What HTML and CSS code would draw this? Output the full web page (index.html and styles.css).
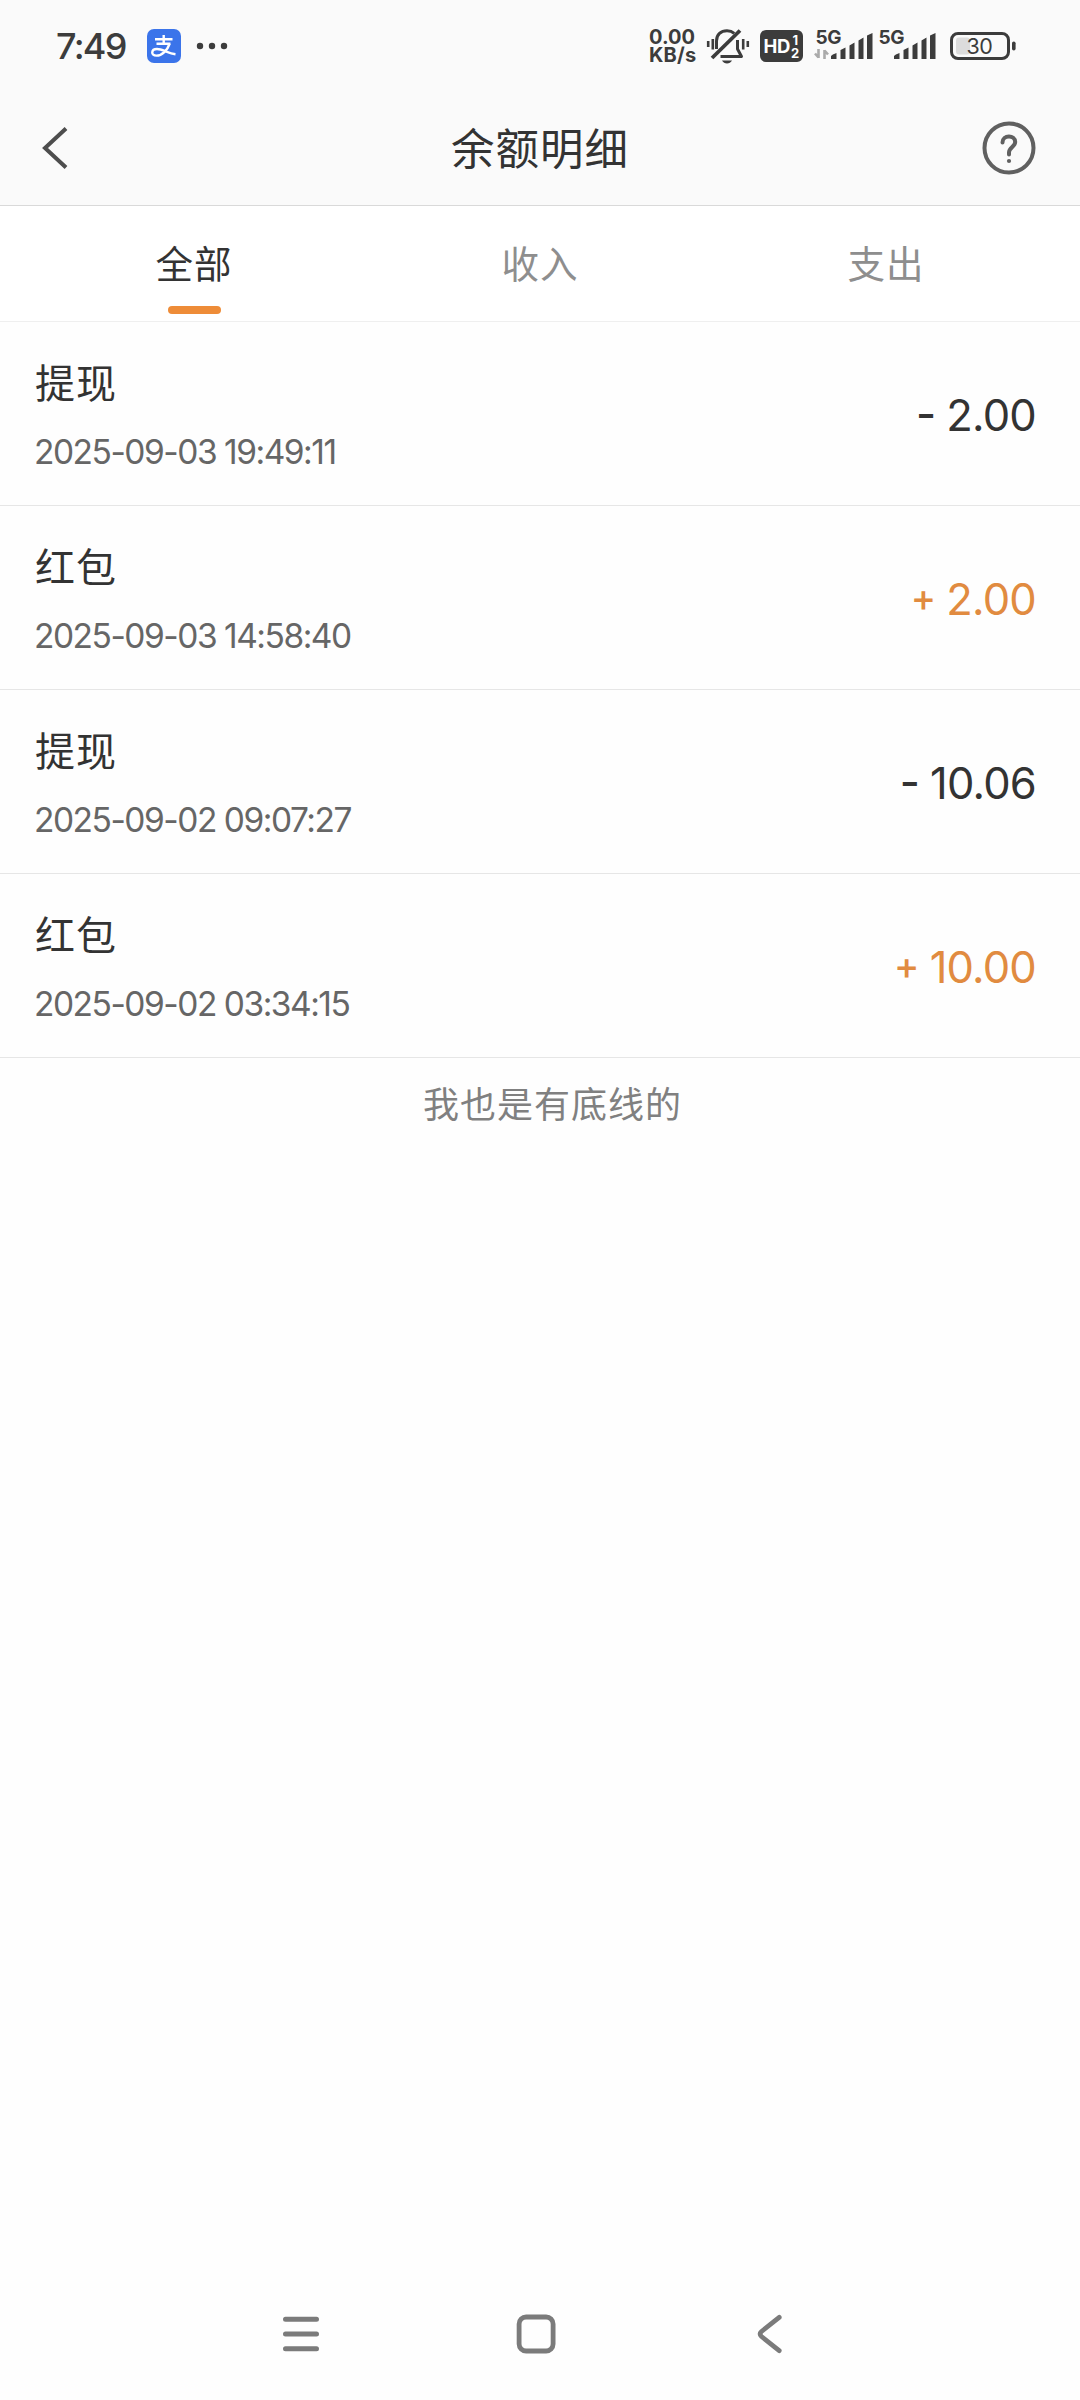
FILE: index.html
```html
<!DOCTYPE html>
<html lang="zh-CN">
<head>
<meta charset="utf-8">
<title>余额明细</title>
<link rel="stylesheet" href="styles.css">
</head>
<body>
<div class="screen">
  <div class="top">
    <div class="status">
      <span class="clock">7:49</span>
      <svg class="alipay" width="34" height="34" viewBox="0 0 34 34">
        <rect width="34" height="34" rx="7" fill="#3b74ea"/>
        <g fill="none" stroke="#fff" stroke-width="2.4">
          <path d="M8 10.200H25.500M16.700 6V14.500M9.500 14.800H23.500"/>
          <path d="M22.500 15C20.500 21 15 26.600 9.500 26.600C3.500 26.600 4 20 10 20C15.500 20 21 24.300 28.500 25.200"/>
        </g>
      </svg>
      <svg class="dots" width="32" height="8" viewBox="0 0 32 8" fill="#3c3c3c">
        <circle cx="4" cy="4" r="3.200"/><circle cx="16" cy="4" r="3.200"/><circle cx="28" cy="4" r="3.200"/>
      </svg>
      <div class="indicators">
        <div class="speed"><span class="speed-value">0.00</span><span class="speed-unit">KB/s</span></div>
        <svg class="bell" width="44" height="38" viewBox="0 0 44 38" fill="none" stroke="#3c3c3c" stroke-width="3">
          <path d="M10.500 22V14C10.500 7.500 15 3.800 21 3.800C24 3.800 26.500 4.800 28.200 6.300M31.500 13V22L35.500 29.500H14.500" stroke-linejoin="round"/>
          <path d="M6 31L34 3.500" stroke-width="3.800"/>
          <path d="M16 33.500C18 37.500 24 37.500 26 33.500Z" fill="#3c3c3c" stroke="none"/>
          <path d="M2.200 14V20M6.800 12V22.500M37.200 12V22.500M41.800 14V20" stroke-width="2.600"/>
        </svg>
        <svg class="hd" width="43" height="32" viewBox="0 0 43 32">
          <rect width="43" height="32" rx="6" fill="#3c3c3c"/>
          <text x="3.500" y="22.500" class="hd-label">HD</text>
          <text x="32.500" y="14.500" class="hd-sim">1</text>
          <text x="31" y="28" class="hd-sim">2</text>
        </svg>
        <svg class="signal first" width="60" height="42" viewBox="0 -4 60 42">
          <text x="1.500" y="15" class="net">5G</text>
          <path d="M4.500 20V29M1 24.500L4.500 28.500M10.500 30V21M14 25.500L10.500 21.500" stroke="#aaa" stroke-width="2.600" fill="none"/>
          <path d="M17 30V27Q18 25.500 22.500 24V30ZM26.500 30V21L31.500 18.500V30ZM35.500 30V16.500L40.500 13.500V30ZM44.500 30V11.500L49.500 8.500V30ZM53 30V6.500L58.500 4V30Z" fill="#3c3c3c"/>
        </svg>
        <svg class="signal" width="60" height="42" viewBox="0 -4 60 42">
          <text x="1.500" y="15" class="net">5G</text>
          <path d="M17 30V27Q18 25.500 22.500 24V30ZM26.500 30V21L31.500 18.500V30ZM35.500 30V16.500L40.500 13.500V30ZM44.500 30V11.500L49.500 8.500V30ZM53 30V6.500L58.500 4V30Z" fill="#3c3c3c"/>
        </svg>
        <svg class="battery" width="66" height="30" viewBox="0 0 66 30">
          <rect x="1.500" y="2.500" width="57" height="25" rx="6.500" fill="none" stroke="#3c3c3c" stroke-width="3"/>
          <rect x="6" y="6.500" width="14" height="17" rx="3" fill="#dcdcdc"/>
          <rect x="62" y="10.500" width="3.600" height="9" rx="1.800" fill="#3c3c3c"/>
          <text x="16.500" y="23" class="level">30</text>
        </svg>
      </div>
    </div>
    <header class="bar">
      <svg width="28" height="44" viewBox="0 0 28 44" fill="none" stroke="#4d4d4d" stroke-width="4"><path d="M24 2.500L3 22L24 41.500"/></svg>
      <h1 class="title">余额明细</h1>
      <svg width="54" height="54" viewBox="0 0 54 54" fill="none" stroke="#606060">
        <circle cx="27" cy="27" r="24.500" stroke-width="4"/>
        <path d="M20.500 21.500C20.500 13.500 33.200 13.500 33.200 21C33.200 25.500 27 26.500 27 31.500V33.500" stroke-width="4" stroke-linecap="round"/>
        <circle cx="27" cy="40" r="2.100" fill="#606060" stroke="none"/>
      </svg>
    </header>
  </div>
  <nav class="tabs">
    <span class="tab active">全部</span>
    <span class="tab">收入</span>
    <span class="tab">支出</span>
  </nav>
  <main class="list">
    <div class="row">
      <div class="info"><span class="name">提现</span><span class="time">2025-09-03 19:49:11</span></div>
      <span class="amount"><span class="sign minus">-</span>2.00</span>
    </div>
    <div class="row">
      <div class="info"><span class="name">红包</span><span class="time">2025-09-03 14:58:40</span></div>
      <span class="amount income"><span class="sign plus">+</span>2.00</span>
    </div>
    <div class="row">
      <div class="info"><span class="name">提现</span><span class="time">2025-09-02 09:07:27</span></div>
      <span class="amount"><span class="sign minus">-</span>10.06</span>
    </div>
    <div class="row">
      <div class="info"><span class="name">红包</span><span class="time">2025-09-02 03:34:15</span></div>
      <span class="amount income"><span class="sign plus">+</span>10.00</span>
    </div>
    <p class="end">我也是有底线的</p>
  </main>
  <div class="system-nav">
    <svg width="40" height="40" viewBox="0 0 40 40" fill="none" stroke="#7b7b7b" stroke-width="5" stroke-linecap="round"><path d="M4.500 5.300H35.500M4.500 20H35.500M4.500 34.700H35.500"/></svg>
    <svg width="40" height="40" viewBox="0 0 40 40" fill="none" stroke="#7b7b7b" stroke-width="4.800"><rect x="3.100" y="3" width="34" height="34" rx="7"/></svg>
    <svg width="40" height="40" viewBox="0 0 40 40" fill="none" stroke="#7b7b7b" stroke-width="4.800" stroke-linecap="round" stroke-linejoin="round"><path d="M29.200 3.300L11.500 17.500Q8.700 20 11.500 22.500L29.200 36.700"/></svg>
  </div>
</div>
</body>
</html>
```
FILE: styles.css
```css
* { box-sizing: border-box; }
body { margin: 0; background: #fefefe; font-family: Inter, "Noto Sans CJK SC", sans-serif; color: #333; }
svg { display: block; flex: none; }
.screen { width: 1080px; height: 2400px; display: flex; flex-direction: column; }
.top { height: 206px; background: #fafafa; border-bottom: 1px solid #d9d9d9; }
.status { height: 92px; padding: 0 64px 0 56px; display: flex; align-items: center; }
.clock { width: 91px; font-size: 36px; font-weight: 500; line-height: 44px; letter-spacing: -1.7px; color: #3c3c3c; white-space: nowrap; }
.dots { margin-left: 15px; }
.indicators { margin-left: auto; display: flex; align-items: center; }
.speed { width: 57px; display: flex; flex-direction: column; font-size: 20px; font-weight: 700; line-height: 18.500px; color: #3c3c3c; }
.speed-unit { letter-spacing: 0.2px; }
.hd { margin-left: 10px; }
.hd-label { font-size: 18.500px; font-weight: 700; letter-spacing: -0.3px; fill: #fff; }
.hd-sim { font-size: 13px; font-weight: 700; fill: #fff; }
.signal { margin-left: 3px; }
.signal.first { margin-left: 11px; }
.net { font-size: 19px; font-weight: 700; letter-spacing: -0.3px; fill: #3c3c3c; }
.battery { margin-left: 13px; }
.level { font-size: 21.500px; letter-spacing: -0.5px; fill: #3c3c3c; }
.bar { height: 111px; padding: 0 44px 0 42px; display: flex; align-items: center; justify-content: space-between; }
.title { margin: 0; padding: 2px 0 0 28px; font-size: 43.500px; font-weight: 400; line-height: 60px; letter-spacing: 1px; color: #333; flex: 1; text-align: center; }
.tabs { height: 116px; padding: 0 21px; border-bottom: 1px solid #efefef; display: grid; grid-template-columns: repeat(3, 1fr); background: #fff; }
.tab { display: flex; flex-direction: column; align-items: center; padding-top: 31px; font-size: 37.500px; line-height: 56px; letter-spacing: 1px; color: #8e8e8e; }
.tab.active { color: #333; }
.tab.active::after { content: ""; width: 53px; height: 8px; margin-top: 13px; border-radius: 4px; background: #ee8c38; }
.list { flex: 1; }
.row { height: 184px; padding: 0 44px 0 34px; border-bottom: 1px solid #e6e6e6; display: flex; align-items: center; justify-content: space-between; }
.info { padding-top: 2px; display: flex; flex-direction: column; gap: 18px; }
.name { padding-left: 1px; font-size: 40px; line-height: 56px; letter-spacing: 1px; }
.time { font-size: 33.500px; line-height: 44px; letter-spacing: -1.480px; color: #666; }
.amount { padding-top: 2px; font-size: 43.500px; line-height: 60px; letter-spacing: -0.800px; display: flex; }
.sign { margin-right: 11px; font-weight: 500; }
.minus { line-height: 57px; }
.plus { font-size: 38px; line-height: 57px; }
.income { color: #e18b40; }
.end { margin: 0; padding: 21px 0 0 25px; font-size: 36px; line-height: 52px; letter-spacing: 1px; text-align: center; color: #808080; }
.system-nav { height: 132px; padding: 0 290px 0 281px; display: flex; align-items: center; justify-content: space-between; }
```
